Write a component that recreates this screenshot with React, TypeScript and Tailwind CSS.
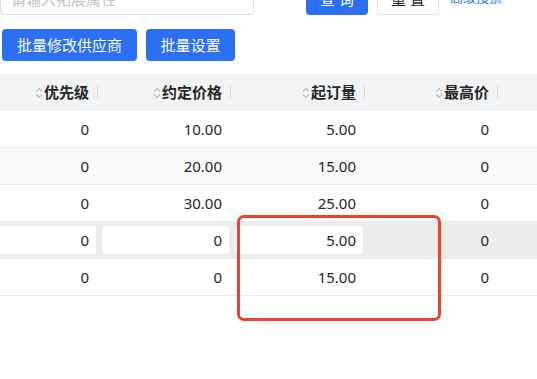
import React from "react";

const font = { fontFamily: '"Noto Sans", "Noto Sans CJK SC", sans-serif' };

// cols: clipped first col, 优先级 ends at 99, then 约定价格, 起订量, 最高价, rest
const cols = "grid grid-cols-[99px_133px_134px_133px_1fr]";

function SortIcon() {
  return (
    <svg width="8" height="12" viewBox="0 0 8 12" className="mr-[1px] shrink-0">
      <polyline points="1,4.5 4,1.5 7,4.5" fill="none" stroke="#b8bcc4" strokeWidth="1.1" />
      <polyline points="1,7.5 4,10.5 7,7.5" fill="none" stroke="#b8bcc4" strokeWidth="1.1" />
    </svg>
  );
}

function HeadCell({ label }: { label?: string }) {
  return (
    <div className="flex items-center justify-end pr-[1px]">
      {label && (
        <>
          <SortIcon />
          <span className="font-bold text-[15px] text-[#262626]">{label}</span>
          <span className="ml-[8px] w-px h-[13px] bg-[#d4d7de]" />
        </>
      )}
    </div>
  );
}

type Row = { vals: string[]; bg: string; edit?: boolean };

const rows: Row[] = [
  { vals: ["0", "10.00", "5.00", "0"], bg: "bg-white" },
  { vals: ["0", "20.00", "15.00", "0"], bg: "bg-[#fafafa]" },
  { vals: ["0", "30.00", "25.00", "0"], bg: "bg-white" },
  { vals: ["0", "0", "5.00", "0"], bg: "bg-[#ececec]", edit: true },
  { vals: ["0", "0", "15.00", "0"], bg: "bg-white" },
];

function Cell({ v, input, first }: { v: string; input?: boolean; first?: boolean }) {
  if (input) {
    return (
      <div className={`py-[4px] pr-[3px] h-full ${first ? "-ml-[20px]" : "pl-[3px]"}`}>
        <div className="h-full bg-white rounded-[3px] flex items-center justify-end pr-[7px] text-[15px] text-[#262626]">
          {v}
        </div>
      </div>
    );
  }
  return (
    <div className="flex items-center justify-end pr-[10px] text-[15px] text-[#262626]">{v}</div>
  );
}

export default function App() {
  return (
    <div className="relative w-[537px] h-[379px] overflow-hidden bg-white" style={font}>
      {/* search bar, clipped at the top */}
      <div className="flex items-center h-[32px] -mt-[17px]">
        <input
          placeholder="请输入拓展属性"
          className="w-[254px] h-[32px] border border-[#dcdfe6] rounded-[4px] pl-[10px] text-[15px] placeholder:text-[#c0c4cc] outline-none"
        />
        <button className="ml-[52px] w-[62px] h-[32px] rounded-[4px] bg-[#2b6ff3] text-white text-[15px]">
          查 询
        </button>
        <button className="ml-[9px] w-[62px] h-[32px] rounded-[4px] border border-[#dcdfe6] bg-white text-[#1f1f1f] text-[15px]">
          重 置
        </button>
        <span className="ml-[11px] flex items-center text-[13px] text-[#2b6ff3] -mt-[2px]">
          高级搜索
          <svg width="9" height="6" viewBox="0 0 9 6" className="ml-[2px]">
            <polyline points="1,1 4.5,4.5 8,1" fill="none" stroke="#2b6ff3" strokeWidth="1.3" />
          </svg>
        </span>
      </div>

      {/* batch actions */}
      <div className="flex gap-[9px] ml-[2px] mt-[14px]">
        <button className="w-[135px] h-[32px] rounded-[4px] bg-[#2b6ff3] text-white text-[15px]">
          批量修改供应商
        </button>
        <button className="w-[89px] h-[32px] rounded-[4px] bg-[#2b6ff3] text-white text-[15px]">
          批量设置
        </button>
      </div>

      {/* table */}
      <div className="mt-[13px]">
        <div className={`${cols} h-[37px] bg-[#f2f3f5]`}>
          <HeadCell label="优先级" />
          <HeadCell label="约定价格" />
          <HeadCell label="起订量" />
          <HeadCell label="最高价" />
          <HeadCell />
        </div>
        {rows.map((r, i) => (
          <div key={i} className={`${cols} h-[37px] border-b border-[#e9ebef] ${r.bg}`}>
            <Cell v={r.vals[0]} input={r.edit} first />
            <Cell v={r.vals[1]} input={r.edit} />
            <Cell v={r.vals[2]} input={r.edit} />
            <Cell v={r.vals[3]} />
            <div />
          </div>
        ))}
      </div>

      {/* red annotation box */}
      <div className="absolute left-[237px] top-[215px] w-[204px] h-[106px] border-[3px] border-[#e8452c] rounded-[7px]" />
    </div>
  );
}
